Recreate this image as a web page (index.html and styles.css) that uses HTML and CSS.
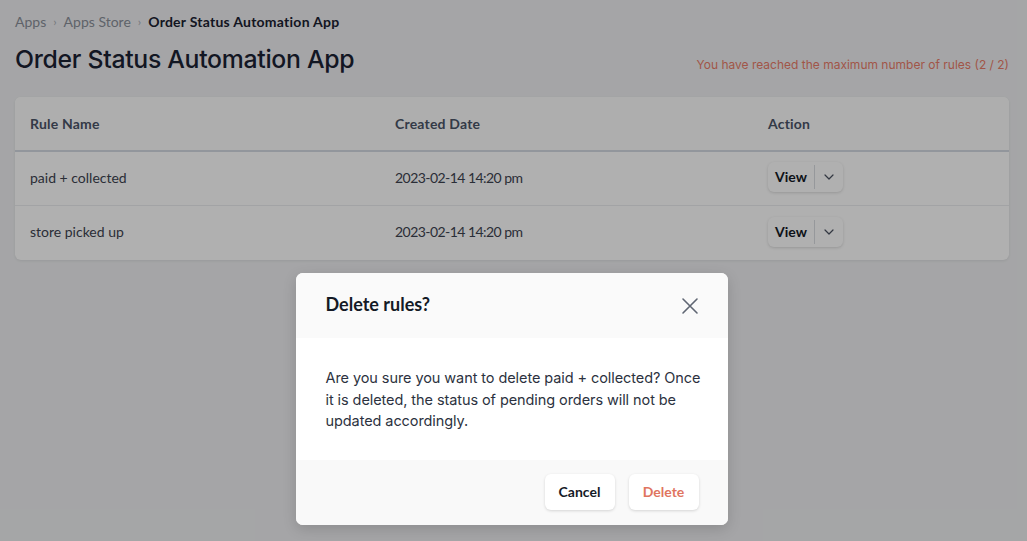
FILE: index.html
```html
<!DOCTYPE html>
<html>
<head>
<meta charset="utf-8">
<link rel="stylesheet" href="styles.css">
</head>
<body>
<div class="page">
  <nav class="crumbs">
    <span class="crumb">Apps</span>
    <span class="sep">›</span>
    <span class="crumb">Apps Store</span>
    <span class="sep">›</span>
    <span class="crumb current">Order Status Automation App</span>
  </nav>
  <div class="head">
    <h1 class="title">Order Status Automation App</h1>
    <div class="limit">You have reached the maximum number of rules (2 / 2)</div>
  </div>
  <div class="card">
    <div class="row hdr">
      <div class="c1">Rule Name</div>
      <div class="c2">Created Date</div>
      <div class="c3">Action</div>
    </div>
    <div class="row">
      <div class="c1">paid + collected</div>
      <div class="c2 date">2023-02-14 14:20 pm</div>
      <div class="c3"><div class="split"><span class="sv">View</span><span class="sd"><svg width="10" height="6" viewBox="0 0 10 6"><path d="M1 1l4 4 4-4" fill="none" stroke="#4a5160" stroke-width="1.2" stroke-linecap="round" stroke-linejoin="round"/></svg></span></div></div>
    </div>
    <div class="row last">
      <div class="c1">store picked up</div>
      <div class="c2 date">2023-02-14 14:20 pm</div>
      <div class="c3"><div class="split"><span class="sv">View</span><span class="sd"><svg width="10" height="6" viewBox="0 0 10 6"><path d="M1 1l4 4 4-4" fill="none" stroke="#4a5160" stroke-width="1.2" stroke-linecap="round" stroke-linejoin="round"/></svg></span></div></div>
    </div>
  </div>
</div>
<div class="overlay">
  <div class="modal">
    <div class="mhead">
      <div class="mtitle">Delete rules?</div>
      <svg class="close" width="18" height="18" viewBox="0 0 18 18"><path d="M2 2l14 14M16 2L2 16" stroke="#5f6673" stroke-width="1.6" stroke-linecap="round"/></svg>
    </div>
    <div class="mbody">Are you sure you want to delete paid + collected? Once it is deleted, the status of pending orders will not be updated accordingly.</div>
    <div class="mfoot">
      <button class="btn">Cancel</button>
      <button class="btn danger">Delete</button>
    </div>
  </div>
</div>
</body>
</html>
```
FILE: styles.css
```css
* { box-sizing: border-box; }
html, body { margin: 0; padding: 0; }
body {
  width: 1027px; height: 541px; overflow: hidden;
  background: #eff0f2;
  font-family: Inter, "Liberation Sans", sans-serif;
  position: relative;
}
.page { padding: 11px 18px 0 15px; }
.crumbs {
  display: flex; align-items: center; gap: 7px;
  font-family: Lato, sans-serif; font-size: 14px; height: 20px;
}
.crumb { color: #8a8f99; }
.crumb.current { color: #1b2130; font-weight: 700; letter-spacing: 0.25px; }
.sep { color: #a9adb5; font-size: 12px; }
.head { display: flex; align-items: flex-end; justify-content: space-between; margin-top: 11px; }
.title { margin: 0; font-size: 24.8px; font-weight: 500; color: #1b2233; letter-spacing: -0.3px; line-height: 34px; }
.limit { color: #ea7c69; font-size: 12px; padding-bottom: 4px; letter-spacing: 0; }
.card {
  margin-top: 21px; background: #fff; border-radius: 6px;
  box-shadow: 0 1px 3px rgba(0,0,0,0.08);
}
.row {
  display: grid; grid-template-columns: 365px 373px 1fr;
  align-items: center; height: 54px; padding: 0 0 3px 15px;
  border-top: 1px solid #ebedf0;
  font-family: Lato, sans-serif; font-size: 14px; color: #3d4350;
}
.row.last { height: 55px; }
.row.hdr { border-top: none; height: 54px; padding-bottom: 0; background: #fdfdfd; border-bottom: 1px solid #d4dae2; border-radius: 6px 6px 0 0; color: #4b5468; font-weight: 700; letter-spacing: 0.2px; }
.row.hdr + .row { border-top: 1px solid #d4dae2; }
.date { letter-spacing: -0.55px; }
.split {
  display: inline-flex; align-items: center; height: 30px; width: 75px;
  border-radius: 6px; background: #fff; box-shadow: 0 1px 3px rgba(0,0,0,0.15);
}
.sv { width: 47px; text-align: center; font-weight: 700; color: #141a26; font-size: 14px; border-right: 1px solid #d9dce1; line-height: 24px; }
.sd { flex: 1; display: flex; justify-content: center; }
.overlay {
  position: absolute; inset: 0; background: rgba(0,0,0,0.31);
  display: flex; justify-content: center; padding: 273px 4px 0 0;
}
.modal {
  width: 432px; height: 252px; border-radius: 7px; overflow: hidden; background: #fff;
  box-shadow: 0 4px 14px rgba(0,0,0,0.15);
  display: flex; flex-direction: column;
}
.mhead { height: 65px; background: #fafafa; display: flex; align-items: center; justify-content: space-between; padding: 0 29px 0 30px; }
.mtitle { font-family: Lato, sans-serif; font-weight: 700; font-size: 18px; color: #141a26; margin-top: -3px; }
.mbody { height: 122px; padding: 29px 22px 0 30px; font-size: 14.5px; line-height: 21.5px; color: #2c3240; letter-spacing: -0.08px; }
.mfoot { flex: 1; background: #f9f9f9; display: flex; justify-content: flex-end; align-items: center; gap: 14px; padding: 0 29px 0 0; }
.btn {
  height: 36px; width: 70px; border: none; border-radius: 6px; background: #fff;
  box-shadow: 0 1px 3px rgba(0,0,0,0.15);
  font-family: Lato, sans-serif; font-weight: 700; font-size: 14px; color: #141a26;
  margin-top: -2px;
}
.btn.danger { color: #df7560; }
```
